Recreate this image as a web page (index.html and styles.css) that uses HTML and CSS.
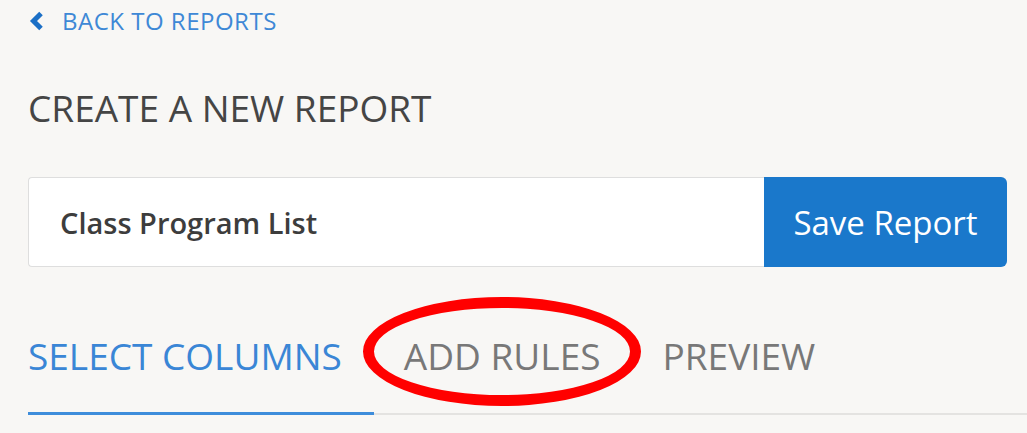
FILE: index.html
```html
<!DOCTYPE html>
<html lang="en">
<head>
    <meta charset="UTF-8">
    <meta name="viewport" content="width=device-width, initial-scale=1.0">
    <title>Create a New Report</title>
    <link rel="stylesheet" href="styles.css">
</head>
<body>
    <div class="page">
        <a class="back-link" href="#">
            <svg class="back-icon" width="16" height="22" viewBox="0 0 16 22" aria-hidden="true">
                <polyline points="12,3.5 4.5,11 12,18.5" fill="none" stroke="#1b6fc6" stroke-width="5" stroke-linecap="butt" stroke-linejoin="miter"/>
            </svg>
            <span>BACK TO REPORTS</span>
        </a>

        <h1>CREATE A NEW REPORT</h1>

        <div class="report-form">
            <input type="text" class="report-name" value="Class Program List">
            <button class="save-btn">Save Report</button>
        </div>

        <div class="tabs">
            <a class="tab active" href="#">SELECT COLUMNS</a>
            <a class="tab" href="#">ADD RULES</a>
            <a class="tab" href="#">PREVIEW</a>
            <span class="highlight-ring"></span>
        </div>
    </div>
</body>
</html>
```

FILE: styles.css
```css
body {
    font-family: 'Open Sans', 'Noto Sans', sans-serif;
    margin: 0;
    background-color: #f8f7f5;
    color: #444;
    -webkit-font-smoothing: antialiased;
}

.page {
    padding: 4px 0 0 28px;
}

.back-link {
    display: flex;
    align-items: center;
    gap: 17px;
    padding-left: 1px;
    color: #3e88d6;
    text-decoration: none;
    font-size: 24px;
    letter-spacing: 0.5px;
    line-height: 34px;
}

.back-icon {
    flex-shrink: 0;
}

h1 {
    margin: 42px 0 0;
    font-size: 37px;
    font-weight: 400;
    line-height: 56px;
    color: #454545;
}

.report-form {
    display: flex;
    margin: 41px 20px 0 0;
    height: 90px;
}

.report-name {
    flex: 1;
    min-width: 0;
    box-sizing: border-box;
    height: 100%;
    padding: 0 31px;
    border: 1px solid #dedede;
    border-right: none;
    border-radius: 4px 0 0 4px;
    background: #fff;
    font-family: inherit;
    font-size: 29px;
    font-weight: 600;
    color: #3d3d3d;
    outline: none;
}

.save-btn {
    width: 243px;
    height: 100%;
    border: none;
    border-radius: 0 6px 6px 0;
    background-color: #1a78cb;
    color: #fff;
    font-family: inherit;
    font-size: 33px;
    cursor: pointer;
}

.tabs {
    position: relative;
    display: flex;
    gap: 30px;
    margin-top: 64px;
    border-bottom: 2px solid #e4e3e1;
}

.tab {
    padding-bottom: 31px;
    font-size: 37px;
    line-height: 50px;
    color: #787878;
    text-decoration: none;
    margin-bottom: -2px;
    border-bottom: 3px solid transparent;
}

.tab.active {
    color: #3a86d6;
    border-bottom-color: #3e8ddb;
    padding-right: 32px;
}

.tab + .tab {
    margin-left: 32px;
}

.tab.active + .tab {
    margin-left: 0;
}

/* red annotation ring drawn over the second tab */
.highlight-ring {
    position: absolute;
    left: 335px;
    top: -34px;
    width: 256px;
    height: 87px;
    border: 11px solid #ff0000;
    border-radius: 50%;
    pointer-events: none;
}
```
